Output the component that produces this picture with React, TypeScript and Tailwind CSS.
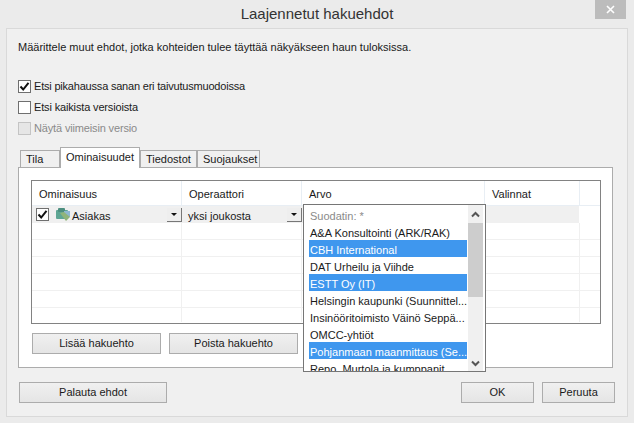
const font = 'font-["Liberation_Sans",Arial,sans-serif]';

const items = [
  { label: 'A&A Konsultointi (ARK/RAK)', on: false },
  { label: 'CBH International', on: true },
  { label: 'DAT Urheilu ja Viihde', on: false },
  { label: 'ESTT Oy (IT)', on: true },
  { label: 'Helsingin kaupunki (Suunnittel...', on: false },
  { label: 'Insinööritoimisto Väinö Seppä...', on: false },
  { label: 'OMCC-yhtiöt', on: false },
  { label: 'Pohjanmaan maanmittaus (Se...', on: true },
  { label: 'Repo, Murtola ja kumppanit', on: false },
];

function Check({ checked, disabled }: { checked?: boolean; disabled?: boolean }) {
  return (
    <span className={`flex h-[13px] w-[13px] shrink-0 items-center justify-center border ${disabled ? 'border-[#c4c4c4] bg-[#e6e6e6]' : 'border-[#6f6f6f] bg-white'}`}>
      {checked && (
        <svg width="11" height="11" viewBox="0 0 11 11">
          <path d="M1.5 5.5 L4.2 8.5 L9.5 1.8" fill="none" stroke="#111" strokeWidth="2" />
        </svg>
      )}
    </span>
  );
}

function Btn({ label, className }: { label: string; className: string }) {
  return (
    <button className={`flex h-[21px] items-center justify-center border border-[#acacac] bg-gradient-to-b from-[#f0f0f0] to-[#e5e5e5] text-[11px] text-[#1a1a1a] ${className}`}>
      {label}
    </button>
  );
}

function Arrow() {
  return (
    <span className="flex h-[14px] w-[15px] shrink-0 items-center justify-center border-r border-b border-[#777] bg-[#eeeeee]">
      <svg width="6" height="3" viewBox="0 0 6 3"><path d="M0 0H6L3 3Z" fill="#111" /></svg>
    </span>
  );
}

function Tab({ label, active, className }: { label: string; active?: boolean; className: string }) {
  return active ? (
    <div className={`relative z-10 mb-[-1px] flex h-[21px] items-center justify-center border border-b-0 border-[#acacac] bg-white pb-[1px] ${className}`}>{label}</div>
  ) : (
    <div className={`flex h-[17px] items-center border border-b-0 border-[#acacac] bg-[#f0f0f0] pl-[5px] ${className}`}>{label}</div>
  );
}

function Chevron({ up }: { up?: boolean }) {
  return (
    <svg width="9" height="7" viewBox="0 0 9 7">
      <path d={up ? 'M1 5.5L4.5 2L8 5.5' : 'M1 1.5L4.5 5L8 1.5'} fill="none" stroke="#555" strokeWidth="2" />
    </svg>
  );
}

export default function App() {
  return (
    <div className={`relative h-[423px] w-[634px] overflow-hidden bg-[#ebebeb] text-[11px] text-[#1a1a1a] ${font}`}>
      <div className="flex h-[28px] items-center justify-center text-[15px] text-[#333]">Laajennetut hakuehdot</div>
      <button className="absolute right-[8px] top-0 flex h-[19px] w-[31px] items-center justify-center bg-[#bcbcbc]">
        <svg width="9" height="9" viewBox="0 0 9 9"><path d="M1 1L8 8M8 1L1 8" stroke="#fff" strokeWidth="1.6" /></svg>
      </button>

      <div className="mx-[6px] flex h-[389px] flex-col border border-[#d9d9d9] bg-[#f0f0f0] pl-[11px] pr-[12px]">
        <p className="mt-[10px] h-[17px] leading-[17px]">Määrittele muut ehdot, jotka kohteiden tulee täyttää näkyäkseen haun tuloksissa.</p>
        <div className="mt-[22px] flex flex-col gap-[4px]">
          <label className="flex h-[17px] items-center gap-[3px] tracking-[-0.2px]"><Check checked />Etsi pikahaussa sanan eri taivutusmuodoissa</label>
          <label className="flex h-[17px] items-center gap-[3px] tracking-[-0.15px]"><Check />Etsi kaikista versioista</label>
          <label className="flex h-[17px] items-center gap-[3px] tracking-[-0.15px] text-[#8a8a8a]"><Check disabled />Näytä viimeisin versio</label>
        </div>

        <div className="mt-[10px] flex h-[20px] items-end pl-[2px]">
          <Tab label="Tila" className="w-[40px]" />
          <Tab active label="Ominaisuudet" className="w-[80px]" />
          <Tab label="Tiedostot" className="w-[57px]" />
          <Tab label="Suojaukset" className="w-[63px]" />
        </div>

        <div className="relative h-[201px] w-[595px] border border-[#acacac] bg-white pl-[12px] pt-[12px]">
          <div className="h-[144px] w-[570px] border border-[#828282] bg-white">
            <div className="flex h-[25px] border-b border-[#e8eef4]">
              <div className="flex w-[150px] items-center border-r border-[#e8eef4] pl-[7px] pt-[3px]">Ominaisuus</div>
              <div className="flex w-[120px] items-center border-r border-[#e8eef4] pl-[7px] pt-[3px]">Operaattori</div>
              <div className="flex w-[183px] items-center border-r border-[#e8eef4] pl-[7px] pt-[3px]">Arvo</div>
              <div className="flex w-[95px] items-center border-r border-[#e8eef4] pl-[7px] pt-[3px]">Valinnat</div>
            </div>
            <div className="flex h-[17px] w-[547px] items-center bg-[#f0f0f0] pl-[4px]">
              <div className="flex w-[146px] items-center">
                <Check checked />
                <svg className="ml-[6px] mr-[1px]" width="16" height="15" viewBox="0 0 16 15">
                  <rect x="1" y="3" width="12" height="9" rx="1" fill="#5ea694" />
                  <rect x="3" y="1" width="7" height="4" rx="1" fill="#4d8f80" />
                  <rect x="9" y="4" width="6" height="6" fill="#8db7d0" />
                  <path d="M5 6L11 14L15 10L9 5Z" fill="#8fb47a" />
                </svg>
                <span className="pt-[3px]">Asiakas</span>
                <span className="ml-auto"><Arrow /></span>
              </div>
              <div className="flex w-[120px] items-center pl-[6px]">
                <span className="pt-[3px]">yksi joukosta</span>
                <span className="ml-auto"><Arrow /></span>
              </div>
            </div>
            {[0, 1, 2, 3, 4].map((i) => (
              <div key={i} className="flex h-[17px] border-b border-[#f0f0f0]">
                <div className="w-[150px] border-r border-[#f0f0f0]" />
                <div className="w-[120px] border-r border-[#f0f0f0]" />
                <div className="w-[183px] border-r border-[#f0f0f0]" />
                <div className="w-[95px] border-r border-[#f0f0f0]" />
              </div>
            ))}
            <div className="flex h-[14px]">
              <div className="w-[150px] border-r border-[#f0f0f0]" />
              <div className="w-[120px] border-r border-[#f0f0f0]" />
              <div className="w-[183px] border-r border-[#f0f0f0]" />
              <div className="w-[95px] border-r border-[#f0f0f0]" />
            </div>
          </div>
          <div className="mt-[9px] flex gap-[8px] pl-[1px]">
            <Btn label="Lisää hakuehto" className="w-[129px]" />
            <Btn label="Poista hakuehto" className="w-[129px]" />
          </div>

          <div className="absolute left-[284px] top-[36px] z-20 flex h-[168px] w-[183px] border border-[#767676] bg-white">
            <div className="h-full w-[164px] overflow-hidden pl-[5px] pr-[1px] pt-[1px]">
              <div className="flex h-[17px] items-center pl-[1px] pt-[3px] text-[#8a8a8a]">Suodatin: *</div>
              {items.map((it) => (
                <div key={it.label} className={`flex h-[17px] items-center whitespace-nowrap pl-[1px] pt-[3px] ${it.on ? 'bg-[#3f97ee] text-white' : ''}`}>{it.label}</div>
              ))}
            </div>
            <div className="flex h-full w-[15px] flex-col items-center bg-[#f0f0f0]">
              <span className="flex h-[18px] items-center"><Chevron up /></span>
              <div className="h-[74px] w-full bg-[#cdcdcd]" />
              <span className="mt-auto flex h-[16px] items-center"><Chevron /></span>
            </div>
          </div>
        </div>

        <div className="mt-[14px] flex pl-[1px]">
          <Btn label="Palauta ehdot" className="w-[148px]" />
          <Btn label="OK" className="ml-auto w-[73px]" />
          <Btn label="Peruuta" className="ml-[8px] w-[73px]" />
        </div>
      </div>
    </div>
  );
}
